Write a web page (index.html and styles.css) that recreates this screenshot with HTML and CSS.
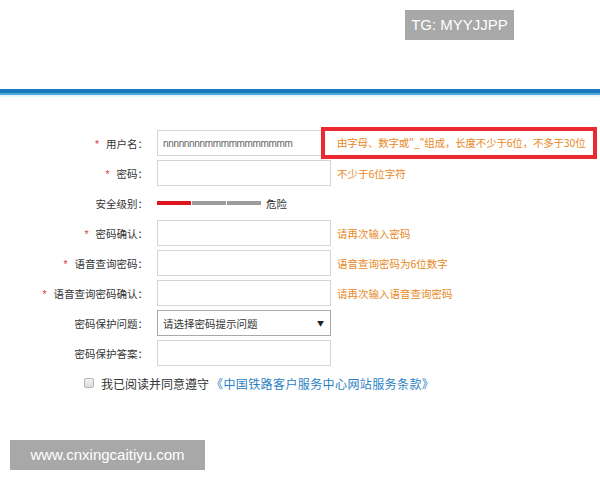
FILE: index.html
```html
<!DOCTYPE html>
<html lang="zh">
<head>
<meta charset="utf-8">
<title>注册</title>
<link rel="stylesheet" href="styles.css">
</head>
<body>
<div class="header">
  <div class="tag">TG: MYYJJPP</div>
</div>
<div class="bar"></div>
<form class="form">
  <div class="row">
    <label class="label"><span class="req">*</span>用户名：</label>
    <div class="input"><span class="val">nnnnnnnnmmmmmmmmmmm</span></div>
    <div class="hint boxed">由字母、数字或"_"组成，长度不少于6位，不多于30位</div>
  </div>
  <div class="row">
    <label class="label"><span class="req">*</span>密码：</label>
    <div class="input"></div>
    <div class="hint">不少于6位字符</div>
  </div>
  <div class="row">
    <label class="label">安全级别：</label>
    <div class="level">
      <span class="seg red"></span><span class="seg"></span><span class="seg"></span>
      <span class="lvtext">危险</span>
    </div>
  </div>
  <div class="row">
    <label class="label"><span class="req">*</span>密码确认：</label>
    <div class="input"></div>
    <div class="hint">请再次输入密码</div>
  </div>
  <div class="row">
    <label class="label"><span class="req">*</span>语音查询密码：</label>
    <div class="input"></div>
    <div class="hint">语音查询密码为6位数字</div>
  </div>
  <div class="row">
    <label class="label"><span class="req">*</span>语音查询密码确认：</label>
    <div class="input"></div>
    <div class="hint">请再次输入语音查询密码</div>
  </div>
  <div class="row">
    <label class="label">密码保护问题：</label>
    <div class="input select"><span class="opt">请选择密码提示问题</span><span class="arrow">▼</span></div>
  </div>
  <div class="row">
    <label class="label">密码保护答案：</label>
    <div class="input"></div>
  </div>
  <div class="agree">
    <span class="check"></span>
    <span class="agtext">我已阅读并同意遵守</span>
    <a class="link">《中国铁路客户服务中心网站服务条款》</a>
  </div>
</form>
<div class="site">www.cnxingcaitiyu.com</div>
</body>
</html>
```

FILE: styles.css
```css
html, body {
  margin: 0;
  padding: 0;
  background: #ffffff;
  font-family: "Noto Sans CJK SC", "Liberation Sans", sans-serif;
  color: #333333;
}
body {
  position: relative;
  width: 600px;
  height: 480px;
  overflow: hidden;
}
.header {
  height: 89px;
  position: relative;
}
.tag {
  position: absolute;
  left: 405px;
  top: 10px;
  width: 109px;
  height: 30px;
  background: #a8a8a8;
  color: #ffffff;
  font-family: "Liberation Sans", sans-serif;
  font-size: 15px;
  line-height: 30px;
  text-align: center;
}
.bar {
  height: 4px;
  background: #1a79bd;
  border-bottom: 2px solid #4ea8dc;
  box-shadow: 0 2px 2px #e3f6fb;
}
.form {
  padding-top: 35px;
  font-size: 11px;
}
.row {
  display: flex;
  align-items: center;
  height: 26px;
  margin-bottom: 4px;
}
.label {
  flex: none;
  width: 148px;
  margin-right: 9px;
  text-align: right;
  font-size: 10.5px;
  color: #333;
  white-space: nowrap;
}
.req {
  color: #e23c3c;
  margin-right: 7px;
  font-family: "Liberation Sans", sans-serif;
}
.input {
  box-sizing: border-box;
  width: 174px;
  height: 26px;
  border: 1px solid #d4d4d4;
  display: flex;
  align-items: center;
  padding-left: 5px;
  flex: none;
  overflow: hidden;
}
.val {
  color: #666;
  font-family: "Liberation Sans", sans-serif;
  font-size: 10px;
  letter-spacing: -0.35px;
  white-space: nowrap;
}
.select {
  border-color: #a9a9a9;
  justify-content: space-between;
  padding-right: 6px;
  color: #333;
  font-size: 10.5px;
}
.arrow {
  font-size: 7px;
  color: #222;
}
.hint {
  flex: none;
  margin-left: 6px;
  color: #e8891e;
  font-size: 10.5px;
  white-space: nowrap;
}
.hint.boxed {
  box-sizing: border-box;
  width: 276px;
  margin-left: -10px;
  height: 32px;
  line-height: 24px;
  border: 4px solid #ea2a2e;
  padding: 0 0 0 12px;
  background: #fff;
  overflow: hidden;
  letter-spacing: -0.2px;
}
.level {
  display: flex;
  align-items: center;
}
.seg {
  width: 34px;
  height: 4px;
  background: #9c9c9c;
  margin-right: 1px;
}
.seg.red {
  background: #e0141c;
}
.lvtext {
  margin-left: 4px;
  font-size: 10.5px;
  color: #333;
}
.agree {
  display: flex;
  align-items: center;
  height: 26px;
  margin-top: 2px;
  padding-left: 84px;
  font-size: 12px;
}
.check {
  box-sizing: border-box;
  width: 10px;
  height: 10px;
  border: 1px solid #b5b5b5;
  border-radius: 2px;
  background: linear-gradient(#f4f4f4, #dcdcdc);
  margin-right: 7px;
}
.agtext {
  color: #333;
}
.link {
  color: #2a7fc4;
  text-decoration: none;
  margin-left: 2px;
  letter-spacing: 0.4px;
}
.site {
  position: absolute;
  left: 10px;
  top: 440px;
  width: 195px;
  height: 30px;
  background: #a8a8a8;
  color: #ffffff;
  font-family: "Liberation Sans", sans-serif;
  font-size: 15px;
  line-height: 30px;
  text-align: center;
}
```
